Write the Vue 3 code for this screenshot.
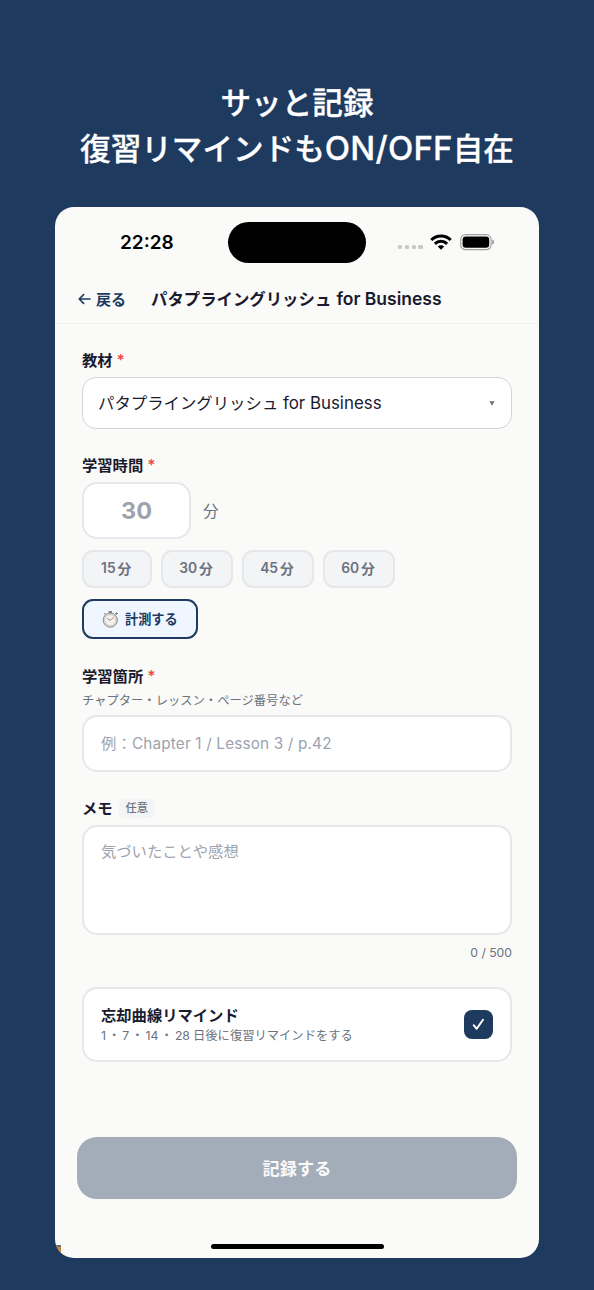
<template>
  <div class="page">
    <h1 class="headline">
      <span class="line">サッと記録</span>
      <span class="line">復習リマインドも<span class="latin">ON/OFF</span>自在</span>
    </h1>

    <div class="phone">
      <!-- ステータスバー -->
      <div class="status-bar">
        <span class="clock">22:28</span>
        <div class="island"></div>
        <div class="indicators">
          <div class="signal"><i v-for="n in 4" :key="n"></i></div>
          <svg class="wifi" width="22" height="16" viewBox="0 0 22 16" fill="none" stroke="#000" stroke-width="3.1">
            <path d="M1.3 6a13.8 13.8 0 0 1 19.4 0" />
            <path d="M4.9 9.8a8.7 8.7 0 0 1 12.2 0" />
            <path d="M11 15.8l-3.2-3.2a4.6 4.6 0 0 1 6.4 0z" fill="#000" stroke="none" />
          </svg>
          <svg class="battery" width="35" height="17" viewBox="0 0 35 17">
            <rect x="0.7" y="0.7" width="30.4" height="15" rx="4.8" fill="none" stroke="#a2a3a1" stroke-width="1.2" />
            <rect x="2.6" y="2.6" width="26.6" height="11.2" rx="3.2" fill="#000" />
            <path d="M32.3 5.6c2.2.8 2.2 4.4 0 5.2z" fill="#8d8e8d" />
          </svg>
        </div>
      </div>

      <header class="nav">
        <a class="back">
          <svg width="13" height="12" viewBox="0 0 13 12" fill="none" stroke="currentColor" stroke-width="1.6" stroke-linecap="round" stroke-linejoin="round">
            <path d="M12 6H1.2M5.6 1.6L1.2 6l4.4 4.4" />
          </svg>
          <span>戻る</span>
        </a>
        <h2 class="title">パタプライングリッシュ <span>for Business</span></h2>
      </header>

      <main class="form">
        <section class="field">
          <label class="label"><span>教材</span><em>*</em></label>
          <div class="select">
            <p>パタプライングリッシュ <span>for Business</span></p>
            <svg width="6" height="5" viewBox="0 0 6 5"><path d="M.4.3h5.2L3 4.8z" fill="#6b7280" /></svg>
          </div>
        </section>

        <section class="field">
          <label class="label"><span>学習時間</span><em>*</em></label>
          <div class="time-row">
            <input v-model="minutes" class="box minutes" placeholder="30" />
            <span class="unit">分</span>
          </div>
          <div class="chips">
            <button v-for="m in presets" :key="m" class="chip" @click="minutes = m">
              {{ m }}<span>分</span>
            </button>
          </div>
          <button class="measure">
            <svg width="17" height="18" viewBox="0 0 17 18">
              <path d="M6.7 1.1h3.2v2H6.7z" fill="#77716a" />
              <path d="M13.2 3.5l1.6-1.2 1 1.2-1.4 1.4z" fill="#6e6964" />
              <path d="M2.3 4.2l1-1" stroke="#9b9791" stroke-width="1.4" />
              <circle cx="8.3" cy="10.1" r="7.1" fill="#dddbd7" stroke="#8e8b86" stroke-width="1" />
              <circle cx="8.3" cy="10.1" r="5.4" fill="#f5f3ef" stroke="#c9c6c1" stroke-width=".7" />
              <path d="M8.3 10.3l3.6-3" stroke="#d26b54" stroke-width=".9" />
              <path d="M8.3 10.3L5.1 8.4" stroke="#77736e" stroke-width=".8" />
            </svg>
            <span>計測する</span>
          </button>
        </section>

        <section class="field place">
          <label class="label"><span>学習箇所</span><em>*</em></label>
          <p class="hint">チャプター・レッスン・ページ番号など</p>
          <input class="box text" placeholder="例：Chapter 1 / Lesson 3 / p.42" />
        </section>

        <section class="field memo">
          <label class="label"><span>メモ</span><span class="optional">任意</span></label>
          <textarea v-model="memo" class="box area" placeholder="気づいたことや感想"></textarea>
          <p class="count">{{ memo.length }} / 500</p>
        </section>

        <section class="remind" @click="remind = !remind">
          <div>
            <h3>忘却曲線リマインド</h3>
            <p>1<i>・</i>7<i>・</i>14<i>・</i><span class="last-day">28</span>日後に復習リマインドをする</p>
          </div>
          <div class="check">
            <svg v-if="remind" width="13" height="13" viewBox="0 0 13 13" fill="none" stroke="#fff" stroke-width="2" stroke-linecap="round" stroke-linejoin="round">
              <path d="M1.7 7.2l3 3.6 6.3-9" />
            </svg>
          </div>
        </section>
      </main>

      <button class="submit">記録する</button>
      <div class="home-bar"></div>
      <span class="corner"></span>
    </div>
  </div>
</template>

<script setup>
import { ref } from 'vue'

const presets = [15, 30, 45, 60]

const minutes = ref('')
const memo = ref('')
const remind = ref(true)
</script>

<style>
body {
  margin: 0;
  background: #1e3a5f;
}
</style>

<style scoped>
* {
  box-sizing: border-box;
}

.page {
  height: 1290px;
  padding-top: 80px;
  overflow: hidden;
  background: #1e3a5f;
  color: #1a1a2e;
  font-family: Inter, 'Noto Sans CJK JP', sans-serif;
}

h1, h2, h3, p {
  margin: 0;
}

button, input, textarea {
  font-family: inherit;
}

.headline {
  height: 127px;
  color: #fff;
  font-size: 30.6px;
  font-weight: 500;
  line-height: 46px;
  text-align: center;
  -webkit-text-stroke: 0.3px #fff;
}

.line {
  display: block;
  height: 45px;
  white-space: nowrap;
}

.latin {
  font-size: 33px;
  letter-spacing: 0.2px;
}

.phone {
  position: relative;
  display: flex;
  flex-direction: column;
  width: 484px;
  height: 1051px;
  margin: 0 auto;
  border-radius: 19px;
  background: #fafaf8;
  overflow: hidden;
}

.status-bar {
  display: grid;
  grid-template-columns: 173px 138px 1fr;
  height: 71px;
  padding-top: 15px;
}

.clock {
  padding-left: 65px;
  color: #000;
  font-size: 19px;
  font-weight: 600;
  line-height: 41px;
}

.island {
  height: 41px;
  border-radius: 21px;
  background: #000;
}

.indicators {
  display: flex;
  align-items: center;
  height: 39px;
  padding-left: 32px;
}

.signal {
  display: flex;
  gap: 2.4px;
  margin-top: 11px;
}

.signal i {
  width: 4.4px;
  height: 4.4px;
  border-radius: 1.5px;
  background: #c8c8c6;
}

.wifi {
  margin-left: 7px;
}

.battery {
  margin: 2px 0 0 8px;
}

.nav {
  display: flex;
  align-items: center;
  height: 46px;
  padding: 0 23px 4px;
  border-bottom: 1px solid #f1f1f0;
}

.back {
  display: flex;
  align-items: center;
  gap: 5px;
  width: 73px;
  color: #1e3a5f;
  font-size: 15px;
  font-weight: 600;
}

.title {
  font-size: 16.4px;
  font-weight: 600;
  line-height: 24px;
  white-space: nowrap;
}

.title span {
  margin-left: 1px;
  font-size: 17.5px;
}

.form {
  height: 813px;
  padding: 26px 27px 0;
}

.field {
  margin-bottom: 26px;
}

.label {
  display: flex;
  align-items: center;
  gap: 4px;
  height: 20px;
  padding-bottom: 2px;
  margin-bottom: 7px;
  font-size: 15.3px;
  font-weight: 600;
}

.label em {
  padding-top: 2px;
  color: #ef4444;
  font-style: normal;
  font-weight: 600;
}

.select {
  display: flex;
  align-items: center;
  justify-content: space-between;
  height: 52px;
  padding: 0 16px 2px 15px;
  border: 1px solid #d1d5db;
  border-radius: 14px;
  background: #fff;
  font-size: 16.4px;
}

.select span {
  font-size: 16.9px;
}

.select svg {
  margin-top: 2px;
}

.box {
  display: block;
  width: 100%;
  border: 2px solid #e5e7eb;
  border-radius: 15px;
  outline: none;
  background: #fff;
  color: #1a1a2e;
}

.box::placeholder {
  color: #9ca3af;
  opacity: 1;
}

.time-row {
  display: flex;
  align-items: center;
  gap: 12px;
}

.minutes {
  width: 109px;
  height: 57px;
  padding: 0 2px 1px;
  font-size: 23.5px;
  font-weight: 700;
  text-align: center;
}

.unit {
  padding-bottom: 2px;
  color: #6b7280;
  font-size: 15.6px;
}

.chips {
  display: flex;
  gap: 9px;
  margin: 11px 0;
}

.chip {
  display: flex;
  align-items: center;
  justify-content: center;
  gap: 2px;
  width: 72px;
  height: 38px;
  padding: 0 1px 2px 0;
  border: 2px solid #e5e7eb;
  border-radius: 11px;
  background: #f3f4f6;
  color: #6b7280;
  font-size: 13.8px;
  font-weight: 600;
}

.chip:first-child {
  width: 69.5px;
}

.measure {
  display: flex;
  align-items: center;
  gap: 6px;
  width: 116px;
  height: 40px;
  margin-bottom: 27px;
  padding: 0 0 1px 18px;
  border: 2px solid #1e3a5f;
  border-radius: 11px;
  background: #eff6ff;
  color: #1e3a5f;
  font-size: 13.2px;
  font-weight: 600;
}

.place .label {
  margin-bottom: 6px;
}

.hint {
  margin-bottom: 5px;
  color: #6b7280;
  font-size: 12.3px;
  line-height: 18px;
}

.text {
  height: 57px;
  padding: 0 17px;
  font-size: 15.3px;
  letter-spacing: 0.17px;
}

.memo {
  margin-bottom: 26px;
}

.memo .label {
  gap: 6px;
}

.optional {
  margin-top: 2px;
  padding: 0 7px;
  border-radius: 5px;
  background: #f3f4f6;
  color: #6b7280;
  font-size: 11.2px;
  font-weight: 500;
  line-height: 19px;
}

.area {
  height: 110px;
  padding: 13px 17px;
  font-size: 15.3px;
  line-height: 23px;
  resize: none;
}

.count {
  margin-top: 9px;
  color: #6b7280;
  font-size: 12.2px;
  line-height: 17px;
  text-align: right;
}

.remind {
  display: flex;
  align-items: center;
  justify-content: space-between;
  height: 75px;
  padding: 0 17px;
  border: 2px solid #e5e7eb;
  border-radius: 15px;
  background: #fff;
}

.remind h3 {
  padding-top: 2px;
  font-size: 15.3px;
  font-weight: 600;
  line-height: 21px;
}

.remind p {
  color: #6b7280;
  font-size: 12.3px;
  line-height: 20px;
}

.remind i {
  margin: 0 2px;
  font-style: normal;
}

.last-day {
  margin-right: 3px;
}

.check {
  display: flex;
  align-items: center;
  justify-content: center;
  width: 29px;
  height: 29px;
  border-radius: 8px;
  background: #1e3a5f;
}

.submit {
  flex: none;
  height: 62px;
  margin: 0 22px;
  padding-bottom: 2px;
  border: 0;
  border-radius: 20px;
  background: #a2adb9;
  color: #fafaf8;
  font-size: 17.2px;
  font-weight: 600;
}

.home-bar {
  flex: none;
  width: 173px;
  height: 5px;
  margin: 45px auto 0;
  border-radius: 3px;
  background: #000;
}

.corner {
  position: absolute;
  bottom: 0;
  left: 0;
  width: 6px;
  height: 13px;
  border-top: 2px solid #66736b;
  background: #c88442;
}
</style>
